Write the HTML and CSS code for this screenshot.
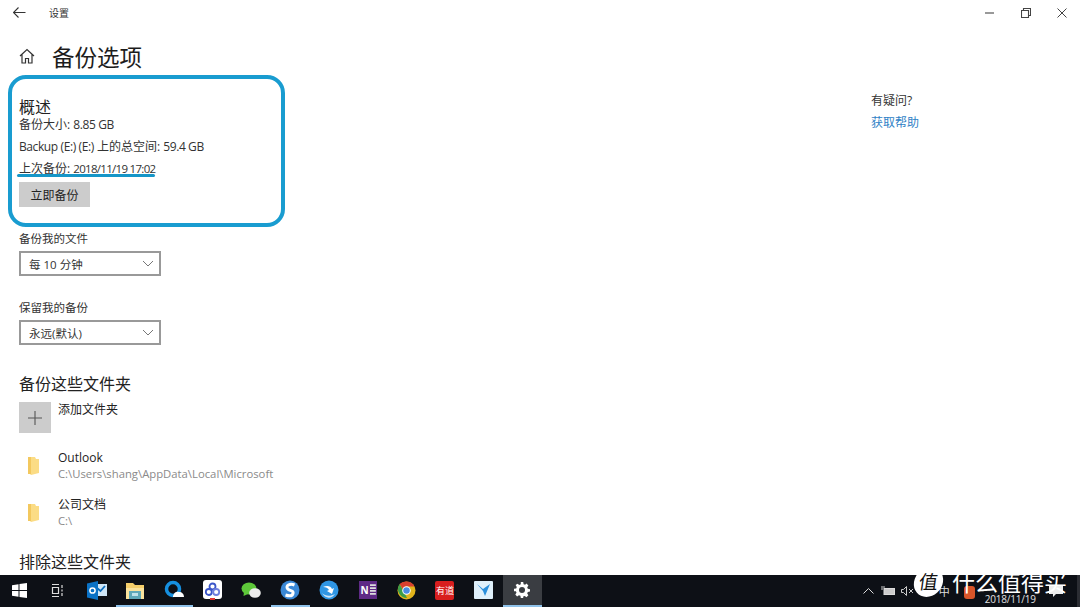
FILE: index.html
```html
<!DOCTYPE html>
<html lang="zh-CN">
<head>
    <meta charset="UTF-8">
    <meta name="viewport" content="width=device-width, initial-scale=1.0">
    <title>设置</title>
    <link rel="stylesheet" href="styles.css">
</head>
<body>

    <div class="window">
        <div class="titlebar">
            <svg class="back-icon" width="13" height="11" viewBox="0 0 13 11"><path d="M5.500.5l-5 5 5 5M.5 5.500h12" fill="none" stroke="#333" stroke-width="1.100"/></svg>
            <span class="app-name">设置</span>
            <div class="window-buttons">
                <svg width="10" height="10" viewBox="0 0 10 10"><path d="M0 5h9" stroke="#555" stroke-width="1.200"/></svg>
                <svg width="10" height="10" viewBox="0 0 10 10"><path d="M.5 2.500h7v7h-7zM2.500 2.500v-2h7v7h-2" fill="none" stroke="#444" stroke-width="1.100"/></svg>
                <svg width="10" height="10" viewBox="0 0 10 10"><path d="M.5.5l9 9M9.500.5l-9 9" stroke="#444" stroke-width="1"/></svg>
            </div>
        </div>

        <div class="content">
            <div class="main-col">
                <div class="page-title">
                    <svg width="16" height="16" viewBox="0 0 16 16"><path d="M1 8 8 1.500 15 8M3 6.500V15h3.500v-4.500h3V15H13V6.500" fill="none" stroke="#333" stroke-width="1.200"/></svg>
                    <h1>备份选项</h1>
                </div>

                <h2 class="overview-title">概述</h2>
                <p class="info first">备份大小: <span class="latin">8.85 GB</span></p>
                <p class="info"><span class="latin">Backup (E:) (E:)</span> 上的总空间: <span class="latin">59.4 GB</span></p>
                <p class="info">上次备份: <span class="date">2018/11/19 17:02</span></p>
                <button class="backup-btn">立即备份</button>

                <label class="field-label">备份我的文件</label>
                <div class="select">
                    <span>每 10 分钟</span>
                    <svg width="12" height="7" viewBox="0 0 12 7"><path d="M1 1l5 5 5-5" fill="none" stroke="#777"/></svg>
                </div>

                <label class="field-label">保留我的备份</label>
                <div class="select">
                    <span>永远(默认)</span>
                    <svg width="12" height="7" viewBox="0 0 12 7"><path d="M1 1l5 5 5-5" fill="none" stroke="#777"/></svg>
                </div>

                <h2 class="section-title">备份这些文件夹</h2>
                <div class="add-row">
                    <div class="add-tile">
                        <svg width="14" height="14" viewBox="0 0 14 14"><path d="M7 0v14M0 7h14" stroke="#555" stroke-width="1.100"/></svg>
                    </div>
                    <span class="item-name">添加文件夹</span>
                </div>

                <div class="folder-row">
                    <svg class="folder-icon" width="16" height="22" viewBox="0 0 16 22"><path d="M3 2h7l1 2h3v14l-8 2-1-1H3z" fill="#fbdc85"/><path d="M3 2h3v17H3z" fill="#f3c85e"/></svg>
                    <div class="folder-text">
                        <div class="item-name">Outlook</div>
                        <div class="item-path">C:\Users\shang\AppData\Local\Microsoft</div>
                    </div>
                </div>
                <div class="folder-row">
                    <svg class="folder-icon" width="16" height="22" viewBox="0 0 16 22"><path d="M3 2h7l1 2h3v14l-8 2-1-1H3z" fill="#fbdc85"/><path d="M3 2h3v17H3z" fill="#f3c85e"/></svg>
                    <div class="folder-text">
                        <div class="item-name">公司文档</div>
                        <div class="item-path">C:\</div>
                    </div>
                </div>

                <h2 class="section-title exclude">排除这些文件夹</h2>
            </div>

            <div class="help-col">
                <div class="help-title">有疑问?</div>
                <a class="help-link" href="#">获取帮助</a>
            </div>
        </div>

        <div class="taskbar">
            <div class="task">
                <svg width="15" height="15" viewBox="0 0 15 15"><path d="M0 2.200 6.500 1.200V7H0zM7.500 1 15 0v7H7.500zM0 8h6.500v5.800L0 12.800zM7.500 8H15v7l-7.500-1z" fill="#fff"/></svg>
            </div>
            <div class="task">
                <svg width="14" height="13" viewBox="0 0 14 13"><path d="M1 .5h7M1 12.500h7M1.500 3.500h6v6h-6zM11 1v3M11 5.500v2M11 9v3" fill="none" stroke="#ddd" stroke-width="1.200"/></svg>
            </div>
            <div class="task">
                <svg width="20" height="19" viewBox="0 0 20 19"><rect x="7" y="3" width="13" height="12" fill="#cfe6f7"/><path d="M10 7l3.500 3L18 5" fill="none" stroke="#0a6cbd" stroke-width="1.800"/><path d="M0 2.500 11 0v19L0 16.500z" fill="#0a72c6"/><circle cx="5.500" cy="9.500" r="2.600" fill="none" stroke="#fff" stroke-width="1.500"/></svg>
            </div>
            <div class="task open">
                <svg width="18" height="17" viewBox="0 0 18 17"><path d="M0 1h7l2 2h9v14H0z" fill="#f5cf6b"/><rect y="6" width="18" height="11" fill="#fbe39c"/><rect x="3" y="9" width="12" height="8" fill="#5fa8b8"/><rect x="6" y="11" width="6" height="3" fill="#bfe2ea"/></svg>
            </div>
            <div class="task open">
                <svg width="20" height="20" viewBox="0 0 20 20"><circle cx="9" cy="9" r="6.500" fill="none" stroke="#1690e0" stroke-width="3.500"/><path d="M9 16c1-4 4-5 6-4 3 0 5 2 5 5H9z" fill="#fff"/></svg>
            </div>
            <div class="task">
                <svg width="19" height="20" viewBox="0 0 19 20"><rect width="19" height="19" rx="3" fill="#fff"/><circle cx="9.500" cy="6.500" r="3" fill="none" stroke="#3a55c8" stroke-width="1.800"/><circle cx="5.800" cy="12" r="3" fill="none" stroke="#3a55c8" stroke-width="1.800"/><circle cx="13.200" cy="12" r="3" fill="none" stroke="#6f7fdd" stroke-width="1.800"/><rect x="7" y="18" width="5" height="2" fill="#d33"/></svg>
            </div>
            <div class="task">
                <svg width="20" height="17" viewBox="0 0 20 17"><ellipse cx="8" cy="6.500" rx="7.500" ry="6" fill="#5ec83a"/><path d="M3 10 2.500 14 7 12z" fill="#5ec83a"/><ellipse cx="14" cy="11" rx="5.800" ry="4.800" fill="#eee"/></svg>
            </div>
            <div class="task open">
                <svg width="20" height="20" viewBox="0 0 20 20"><circle cx="10" cy="10" r="9.500" fill="#3a88d6"/><path d="M14.500 5C9.500 3 5.500 6 7.500 8.700s6.500 1.500 5.500 4.800-4.500 2.500-7.500 1.500" fill="none" stroke="#fff" stroke-width="3"/></svg>
            </div>
            <div class="task">
                <svg width="20" height="20" viewBox="0 0 20 20"><circle cx="10" cy="10" r="9.500" fill="#2f96e4"/><path d="M4 7c4-2 8-1 9 2l2-1-2 6-5-3 2-1c-1-2-3-3-6-3z" fill="#fff"/><path d="M3 13c3 3 8 4 13 1-3 5-10 5-13-1z" fill="#cfe6f7"/></svg>
            </div>
            <div class="task">
                <div class="onenote">
                    <span>N</span>
                    <svg width="7" height="14" viewBox="0 0 7 14"><path d="M0 2h6M0 5h6M0 8h6M0 11h6" stroke="#ddd" stroke-width="1.800"/></svg>
                </div>
            </div>
            <div class="task">
                <svg width="19" height="19" viewBox="0 0 38 38"><circle cx="19" cy="19" r="18" fill="#e2b41b"/><path d="M19 1a18 18 0 0 1 16 10H19a8 8 0 0 0-7.500 5L5 6a18 18 0 0 1 14-5z" fill="#d8402f"/><path d="M5 6l8 14 7 14a18 18 0 0 1-15-28z" fill="#3c9d48"/><circle cx="19" cy="19" r="8.500" fill="#fff"/><circle cx="19" cy="19" r="6.500" fill="#4a8de0"/></svg>
            </div>
            <div class="task">
                <div class="youdao">有道</div>
            </div>
            <div class="task">
                <svg width="19" height="18" viewBox="0 0 19 18"><rect width="19" height="18" rx="1" fill="#dff0fb"/><path d="M3 3l6 5 7-5-5 12-2-5z" fill="#2a8fdc"/></svg>
            </div>
            <div class="task active">
                <svg width="16" height="16" viewBox="0 0 16 16"><path d="M6.800 0h2.400l.4 2.200 1.500.6L12.500 1.600l1.900 1.900-1.200 1.800.6 1.500 2.200.4v2.400l-2.200.4-.6 1.500 1.200 1.800-1.900 1.900-1.800-1.200-1.500.6L9.200 16H6.800l-.4-2.200-1.500-.6-1.800 1.200-1.800-1.900 1.200-1.800-.6-1.500L0 9.200V6.800l2.200-.4.6-1.500-1.200-1.800L3.500 1.700l1.800 1.200 1.500-.6z" fill="#fff"/><circle cx="8" cy="8" r="3" fill="#3a3d42"/></svg>
            </div>

            <div class="tray">
                <svg width="11" height="6" viewBox="0 0 11 6"><path d="M.5 5.500l5-5 5 5" fill="none" stroke="#ddd"/></svg>
                <svg class="tray-battery" width="14" height="10" viewBox="0 0 14 10"><rect x="3" y="2.500" width="10.500" height="6" fill="#ccc" stroke="#ddd"/><path d="M0 1h4M0 3h2" stroke="#ccc"/></svg>
                <svg class="tray-sound" width="14" height="10" viewBox="0 0 14 10"><path d="M.5 3.500h2l3-3v9l-3-3h-2z" fill="none" stroke="#ccc"/><path d="M8 3l4 4M12 3l-4 4" stroke="#ccc"/></svg>
                <span class="ime">中</span>
                <div class="sogou"></div>
                <div class="clock">2018/11/19</div>
                <svg class="notify" width="14" height="12" viewBox="0 0 14 12"><path d="M0 0h14v9H7l-3 3V9H0z" fill="#eee"/></svg>
            </div>
        </div>

        <div class="mark-box"></div>
        <div class="mark-line"></div>

        <div class="watermark">
            <div class="wm-badge">值</div>
            <span class="wm-text">什么值得买</span>
        </div>
    </div>

</body>
</html>
```

FILE: styles.css
```css
* {
    box-sizing: border-box;
}

body {
    margin: 0;
    font-family: 'Open Sans', 'Noto Sans CJK SC', sans-serif;
    background-color: #ffffff;
    color: #222222;
}

.window {
    position: relative;
    width: 1080px;
    height: 607px;
    display: flex;
    flex-direction: column;
    overflow: hidden;
}

/* title bar */
.titlebar {
    height: 25px;
    flex-shrink: 0;
    display: flex;
    align-items: center;
    padding-left: 13px;
}

.app-name {
    margin-left: 23px;
    font-size: 10px;
    color: #333333;
}

.window-buttons {
    margin-left: auto;
    display: flex;
    align-items: center;
    gap: 26px;
    padding-right: 13px;
}

/* main area */
.content {
    flex: 1;
    min-height: 0;
    overflow: hidden;
    display: flex;
    justify-content: space-between;
}

.main-col {
    padding-left: 19px;
    width: 400px;
}

.page-title {
    display: flex;
    align-items: center;
    gap: 17px;
    height: 32px;
    margin-top: 15px;
}

.page-title h1 {
    margin: 0;
    font-size: 22.500px;
    font-weight: 400;
    color: #1c1c1c;
}

.overview-title {
    margin: 24px 0 0;
    height: 22px;
    line-height: 22px;
    font-size: 16px;
    font-weight: 400;
}

.info {
    margin: 0;
    height: 22px;
    line-height: 22px;
    font-size: 12px;
    color: #333333;
}

.info.first {
    height: 14px;
    line-height: 14px;
    margin-bottom: 4px;
}

.latin {
    letter-spacing: -0.400px;
}

.date {
    font-size: 11.500px;
    letter-spacing: -0.700px;
}

.backup-btn {
    display: block;
    margin-top: 2px;
    width: 71px;
    height: 25px;
    border: none;
    background-color: #cccccc;
    font-family: inherit;
    font-size: 12px;
    color: #222222;
}

.field-label {
    display: block;
    margin-top: 25px;
    height: 14px;
    line-height: 14px;
    font-size: 11.500px;
    color: #333333;
}

.select {
    margin-top: 5px;
    width: 142px;
    height: 25px;
    border: 2px solid #999999;
    display: flex;
    align-items: center;
    justify-content: space-between;
    padding: 0 5px 0 8px;
    font-size: 11.500px;
    color: #333333;
}

.section-title {
    margin: 29px 0 0;
    height: 20px;
    line-height: 20px;
    font-size: 16px;
    font-weight: 400;
}

.section-title.exclude {
    margin-top: 23px;
}

.add-row {
    margin-top: 8px;
    display: flex;
    gap: 7px;
}

.add-tile {
    width: 32px;
    height: 31px;
    background-color: #cccccc;
    display: flex;
    align-items: center;
    justify-content: center;
}

.item-name {
    font-size: 12px;
    line-height: 16px;
    color: #222222;
}

.add-row .item-name {
    margin-top: 0;
}

.item-path {
    font-size: 11.300px;
    line-height: 16px;
    color: #8a8a8a;
}

.folder-row {
    margin-top: 17px;
    display: flex;
    align-items: center;
    gap: 17px;
    padding-left: 6px;
}

.folder-row + .folder-row {
    margin-top: 15px;
}

.folder-icon {
    flex-shrink: 0;
}

.help-col {
    width: 209px;
    padding-top: 68px;
}

.help-title {
    font-size: 12px;
    line-height: 16px;
    color: #333333;
}

.help-link {
    display: block;
    margin-top: 6px;
    font-size: 12px;
    line-height: 16px;
    color: #2f82c6;
    text-decoration: none;
}

/* taskbar */
.taskbar {
    height: 32px;
    flex-shrink: 0;
    background-color: #0d1016;
    display: flex;
    align-items: center;
}

.task {
    width: 38.700px;
    flex-shrink: 0;
    height: 100%;
    display: flex;
    align-items: center;
    justify-content: center;
    border-bottom: 2px solid transparent;
}

.task.open {
    border-bottom-color: #8fc2ea;
}

.task.active {
    background-color: #3a3d42;
    border-bottom-color: #8fc2ea;
}

.onenote {
    display: flex;
    align-items: center;
    gap: 1px;
    width: 18px;
    height: 18px;
    background-color: #5f2a86;
    padding-left: 2px;
    color: #ffffff;
    font-size: 10px;
    font-weight: 700;
}

.youdao {
    width: 19px;
    height: 19px;
    border-radius: 2px;
    background-color: #d81e1e;
    color: #ffffff;
    font-size: 9px;
    line-height: 19px;
    text-align: center;
    white-space: nowrap;
    overflow: hidden;
}

.tray {
    flex: 1;
    display: flex;
    align-items: center;
    padding-left: 321px;
    height: 100%;
    color: #dddddd;
    font-size: 11px;
    border-right: 3px solid #2b2d33;
}

.tray-battery {
    margin-left: 7px;
}

.tray-sound {
    margin-left: 6px;
}

.ime {
    margin-left: 24px;
}

.sogou {
    margin-left: 14px;
    margin-top: 3px;
    width: 11px;
    height: 13px;
    border-radius: 3px;
    background-color: #d9562a;
}

.clock {
    align-self: flex-end;
    margin-left: 10px;
    margin-bottom: 2px;
    line-height: 11px;
    font-size: 10px;
    letter-spacing: -0.200px;
    color: #e2e2e2;
}

.notify {
    margin-left: 13px;
}

/* blue hand-drawn marks on the screenshot */
.mark-box {
    position: absolute;
    left: 8px;
    top: 75px;
    width: 277px;
    height: 152px;
    border: 4px solid #199cd0;
    border-radius: 18px;
}

.mark-line {
    position: absolute;
    left: 17px;
    top: 174px;
    width: 138px;
    height: 3px;
    border-radius: 2px;
    background-color: #1596c8;
}

/* site watermark */
.watermark {
    position: absolute;
    left: 914px;
    top: 567px;
    display: flex;
    align-items: center;
    gap: 9px;
}

.wm-badge {
    width: 29px;
    height: 30px;
    border-radius: 50%;
    background-color: #ffffff;
    color: #111111;
    font-size: 19px;
    line-height: 30px;
    text-align: center;
    transform: skewX(-8deg);
}

.wm-text {
    font-size: 23px;
    line-height: 20px;
    color: #ffffff;
    white-space: nowrap;
}
```
